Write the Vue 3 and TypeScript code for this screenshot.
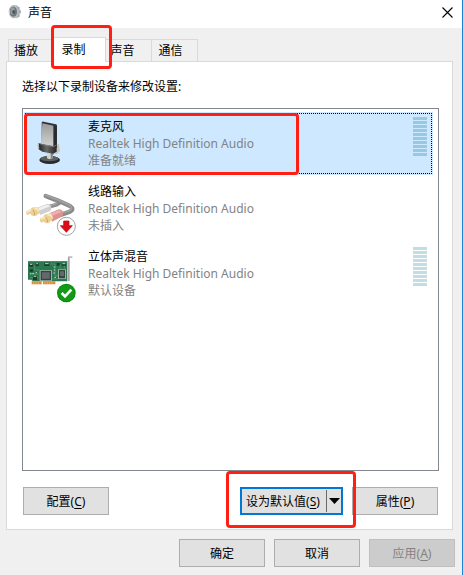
<script setup lang="ts">
import { ref } from 'vue'

interface Device {
  id: string
  name: string
  driver: string
  status: string
  meter: boolean
}

const tabs = ['播放', '录制', '声音', '通信']
const activeTab = ref('录制')
const selected = ref('mic')

const devices: Device[] = [
  { id: 'mic', name: '麦克风', driver: 'Realtek High Definition Audio', status: '准备就绪', meter: true },
  { id: 'line', name: '线路输入', driver: 'Realtek High Definition Audio', status: '未插入', meter: false },
  { id: 'mix', name: '立体声混音', driver: 'Realtek High Definition Audio', status: '默认设备', meter: true },
]
</script>

<template>
  <div class="window">
    <header class="titlebar">
      <svg class="app-icon" viewBox="0 0 42 48" aria-hidden="true">
        <path d="M12 5 22 3 34 9 39 23 34 38 25 43 12 40z" fill="#d5d8d9" />
        <path d="M23 3 34 9 39 23 34 38 25 43 30 34 32 20z" fill="#a3a8ab" />
        <ellipse cx="17" cy="23" rx="15" ry="20" fill="#b4b9bc" />
        <ellipse cx="16" cy="23" rx="11" ry="15" fill="#6b757b" />
        <ellipse cx="14" cy="21" rx="7" ry="11" fill="#939da2" />
        <ellipse cx="17" cy="24" rx="4" ry="6" fill="#465057" />
        <path d="M5 10 9 6M3 20v10M7 38l4 3M29 5l3 4M35 14l2 5M37 27l-2 7" stroke="#f4f5f5" stroke-width="3" />
      </svg>
      <h1 class="title">声音</h1>
      <button class="close" type="button" aria-label="关闭">
        <svg viewBox="0 0 11 11" aria-hidden="true"><path d="M.5.5l10 10M10.500.5l-10 10" stroke="#000" stroke-width="1.1" /></svg>
      </button>
    </header>

    <main class="body">
      <nav class="tabs" role="tablist">
        <button
          v-for="tab in tabs"
          :key="tab"
          type="button"
          role="tab"
          class="tab"
          :class="{ active: tab === activeTab }"
          :aria-selected="tab === activeTab"
          @click="activeTab = tab"
        >
          {{ tab }}<span v-if="tab === '录制'" class="mark mark-tab"></span>
        </button>
      </nav>

      <section class="panel">
        <p class="hint">选择以下录制设备来修改设置:</p>

        <ul class="devices" role="listbox" aria-label="录制设备">
          <li
            v-for="device in devices"
            :key="device.id"
            class="device"
            :class="{ selected: device.id === selected }"
            role="option"
            :aria-selected="device.id === selected"
            @click="selected = device.id"
          >
            <svg v-if="device.id === 'mic'" class="device-icon" viewBox="0 0 168 174" aria-hidden="true">
              <defs>
                <linearGradient id="mesh" x1="0" y1="0" x2="0" y2="1">
                  <stop offset="0" stop-color="#9a9c9d" />
                  <stop offset="1" stop-color="#d4d4d2" />
                </linearGradient>
                <linearGradient id="dark" x1="0" y1="0" x2="1" y2="0">
                  <stop offset="0" stop-color="#1d1f20" />
                  <stop offset=".45" stop-color="#68696a" />
                  <stop offset="1" stop-color="#232425" />
                </linearGradient>
              </defs>
              <ellipse cx="77" cy="132" rx="31" ry="12" fill="#292a2b" />
              <ellipse cx="76" cy="128" rx="27" ry="8" fill="#5d5f60" />
              <path d="M65 108h26l-5 9v10q-9 5-17 0v-10z" fill="#d4d6d6" />
              <path d="M80 110h11l-5 9v8l-6 2z" fill="#858788" />
              <path d="M94 87 105 84 108 105 99 114 86 112z" fill="#c6c4bf" />
              <path d="M53 20q1-4 6-3l37 8q3 1 3 5v65l-46-4z" fill="#343637" />
              <path d="M55 22 88 29 88 93 51 84z" fill="url(#mesh)" />
              <path d="M91 29 98 30 97 88 90 94z" fill="#292b2c" />
              <path d="M44 81 54 84 87 90 98 85 98 107 87 113 55 107 43 99z" fill="url(#dark)" />
              <path d="M45 82 55 86 88 92 98 87" fill="none" stroke="#909293" stroke-width="2" />
              <path d="M43 84q-3 7 2 14" fill="none" stroke="#bfc1c1" stroke-width="4" />
            </svg>

            <svg v-else-if="device.id === 'line'" class="device-icon" viewBox="0 0 168 174" aria-hidden="true">
              <g transform="translate(0 15)">
                <g fill="none" stroke-linecap="round" stroke-linejoin="round">
                  <path d="M76 62 98 56 110 48" stroke="#8b8b8b" stroke-width="12" />
                  <path d="M65 30 100 43 138 60Q152 70 138 77L112 86" stroke="#8b8b8b" stroke-width="13" />
                  <path d="M65 28 100 41 138 58Q148 68 136 74L112 82" stroke="#a2a2a2" stroke-width="5" />
                  <path d="M79 59 98 53" stroke="#a6a6a6" stroke-width="4" />
                  <path d="M68 36 96 49" stroke="#747474" stroke-width="2" />
                </g>
                <path d="M40 65 69 54q8-2 12 7 3 10-4 15L49 87z" fill="#cfcfd0" />
                <path d="M43 66 69 56q6 0 9 5L45 74z" fill="#f1f1f3" />
                <path d="M76 82 105 70q9 0 12 9 2 9-5 14L84 107z" fill="#dc9290" />
                <path d="M79 82 106 72l7 6-31 13z" fill="#edb0ae" />
                <g fill="#edcf93">
                  <path d="M7 76 24 68l4 11-18 8q-5-3-3-11zM48 97l17-7 5 12-18 8q-6-3-4-13z" />
                  <ellipse cx="30" cy="77" rx="11" ry="13" />
                  <ellipse cx="69" cy="98" rx="12" ry="14" />
                  <path d="M28 65 41 64 49 80 34 90zM68 85l12-3 8 15-14 13z" />
                </g>
                <path d="M9 78 22 72M50 99l13-5M31 68l8 0 5 8M70 87l9-1 5 9" fill="none" stroke="#fae9c1" stroke-width="5" />
                <path d="M27 72q7 7 4 16M65 94q8 6 5 15" fill="none" stroke="#c4a76b" stroke-width="3" />
                <circle cx="127" cy="121" r="27" fill="#fff" stroke="#a2a2a2" stroke-width="3" />
                <path d="M119 105h16v14h10l-18 20-18-20h10z" fill="#dc0b16" stroke="#c2000b" stroke-width="2" />
              </g>
            </svg>

            <svg v-else class="device-icon" viewBox="0 0 168 174" aria-hidden="true">
              <g transform="translate(0 12)">
                <path d="M132 19h13v5h-7v69h-6z" fill="#bbbdbe" />
                <path d="M133 22v70" stroke="#8f9293" stroke-width="2" />
                <path d="M12 33h118v61H26l-4-5H12z" fill="#2b7850" />
                <path d="M12 35h118M16 72h28M79 42h14v35h10M32 47v13h15M84 87h18M18 83h25M108 42v15M121 44v12" fill="none" stroke="#5f9c76" stroke-width="2" />
                <path d="M23 94h30v9H23zM57 94h37v9H57z" fill="#d38a3a" />
                <path d="M29 96v7M36 96v7M43 96v7M63 96v7M70 96v7M77 96v7M84 96v7" stroke="#f0c27c" stroke-width="2" />
                <path d="M47 61h37v32H47zM102 58h24v29h-24z" fill="#9db5a7" />
                <path d="M50 63h31v28H50zM105 60h18v25h-18z" fill="#394344" />
                <path d="M54 67h23v19H54zM108 64h12v14h-12z" fill="#626b6b" />
                <path d="M16 42h11v8H16zM35 39h9v9h-9zM61 38h15v10H61zM98 39h9v8h-9zM113 39h13v8h-13zM17 58h10v7H17zM27 77h12v13H27z" fill="#173c2b" />
                <path d="M18 43h7M63 41h11M37 41h5M115 41h9M29 79h8M18 71h4M25 71h5M35 68h4M89 51h5M89 60h5M88 69h5M91 82h5" stroke="#c5d4ca" stroke-width="3" />
                <circle cx="127" cy="129" r="28" fill="#07890b" />
                <circle cx="127" cy="129" r="25" fill="#109a16" />
                <path d="M113 129 123 139 142 119" fill="none" stroke="#fff" stroke-width="8" />
              </g>
            </svg>

            <div class="info">
              <span class="name">{{ device.name }}</span>
              <span>{{ device.driver }}</span>
              <span>{{ device.status }}</span>
            </div>
            <div v-if="device.meter" class="meter" aria-hidden="true">
              <i v-for="n in 10" :key="n"></i>
            </div>
            <span v-if="device.id === 'mic'" class="mark mark-device"></span>
          </li>
        </ul>

        <div class="actions">
          <button class="btn" type="button">配置(<u>C</u>)</button>
          <div class="split">
            <button class="split-main" type="button">设为默认值(<u>S</u>)</button>
            <button class="split-arrow" type="button" aria-label="更多选项">
              <svg viewBox="0 0 11 6" aria-hidden="true"><path d="M0 0h11L5.500 6z" /></svg>
            </button>
            <span class="mark mark-default"></span>
          </div>
          <button class="btn" type="button">属性(<u>P</u>)</button>
        </div>
      </section>

      <footer class="footer">
        <button class="btn" type="button">确定</button>
        <button class="btn" type="button">取消</button>
        <button class="btn" type="button" disabled>应用(<u>A</u>)</button>
      </footer>
    </main>
  </div>
</template>

<style>
body {
  margin: 0;
}
</style>

<style scoped>
.window,
.window * {
  box-sizing: border-box;
}

.window {
  display: flex;
  flex-direction: column;
  min-height: 100vh;
  border-right: 1px solid #1883d7;
  background: #f0f0f0;
  color: #000;
  font: 12px/17px "Noto Sans", "Noto Sans CJK SC", sans-serif;
}

button {
  margin: 0;
  padding: 0;
  border: 0;
  background: none;
  color: inherit;
  font: inherit;
}

.titlebar {
  display: flex;
  align-items: center;
  height: 28px;
  padding: 0 9px 4px 8px;
  background: #fff;
}

.app-icon {
  width: 14px;
  height: 16px;
}

.title {
  flex: 1;
  margin: 0 0 0 6px;
  font: inherit;
}

.close svg {
  display: block;
  width: 11px;
  height: 11px;
}

.body {
  display: flex;
  flex: 1;
  flex-direction: column;
  padding: 9px 7px 8px 6px;
}

.tabs {
  display: flex;
  align-items: flex-end;
  padding-left: 2px;
}

.tab {
  width: 46px;
  height: 22px;
  border: 1px solid #d9d9d9;
  border-bottom: 0;
  border-left: 0;
}

.tab:first-child {
  border-left: 1px solid #d9d9d9;
  padding-right: 10px;
}

.tab:last-child {
  padding-right: 8px;
}

.tab.active {
  position: relative;
  z-index: 1;
  width: 52px;
  height: 25px;
  margin-bottom: -1px;
  padding: 0 12px 2px 0;
  background: #fff;
}

.tab.active + .tab {
  padding-right: 12px;
}

.panel {
  display: flex;
  flex: 1;
  flex-direction: column;
  margin-right: 2px;
  padding: 16px 13px 14px 15px;
  border: 1px solid #d9d9d9;
  background: #fff;
}

.hint {
  margin: 0 0 13px;
}

.devices {
  display: flex;
  flex: 1;
  flex-direction: column;
  gap: 2px;
  margin: 0;
  padding: 3px 5px 3px 1px;
  border: 1px solid #828790;
  list-style: none;
}

.device {
  position: relative;
  display: flex;
  align-items: flex-start;
  height: 63px;
  padding: 4px 5px 0 0;
}

.device.selected {
  background: #cde8ff;
}

.device.selected::after {
  position: absolute;
  inset: 1px;
  border: 1px dotted #000;
  content: "";
}

.device-icon {
  flex: none;
  width: 56px;
  height: 58px;
}

.info {
  display: flex;
  flex: 1;
  flex-direction: column;
  padding: 2px 0 0 8px;
  color: #838383;
}

.name {
  color: #000;
}

.meter {
  display: grid;
  gap: 1px;
  width: 14px;
  margin: 1px 1px 0 0;
}

.meter i {
  height: 3px;
  background: #c2dde3;
}

.selected .meter i {
  background: #99c9e2;
}

.actions {
  display: flex;
  gap: 9px;
  padding: 16px 1px 0;
}

.actions > .btn:first-child {
  margin-right: auto;
}

.btn {
  width: 86px;
  height: 28px;
  border: 1px solid #adadad;
  background: #e1e1e1;
}

.btn:disabled {
  border-color: #bfbfbf;
  background: #ccc;
  color: #838383;
}

u {
  text-underline-offset: 2px;
}

.split {
  position: relative;
  display: flex;
  align-items: center;
  height: 28px;
  border: 2px solid #0078d7;
  background: #e1e1e1;
}

.split-main {
  width: 84px;
  padding-right: 2px;
}

.split-arrow {
  display: grid;
  place-items: center;
  width: 15px;
  height: 22px;
  border-left: 1px solid #696969;
}

.split-arrow svg {
  width: 11px;
  height: 6px;
}

.footer {
  display: flex;
  justify-content: flex-end;
  gap: 9px;
  padding-top: 9px;
}

/* Highlight frames drawn over the controls */
.mark {
  position: absolute;
  z-index: 2;
  border: 3px solid #ff2013;
  border-radius: 4px;
  pointer-events: none;
}

.mark-tab {
  inset: -13px -7px -7px -3px;
}

.mark-device {
  inset: 1px 134px 0 0;
}

.mark-default {
  inset: -18px -15px -15px -16px;
}
</style>
